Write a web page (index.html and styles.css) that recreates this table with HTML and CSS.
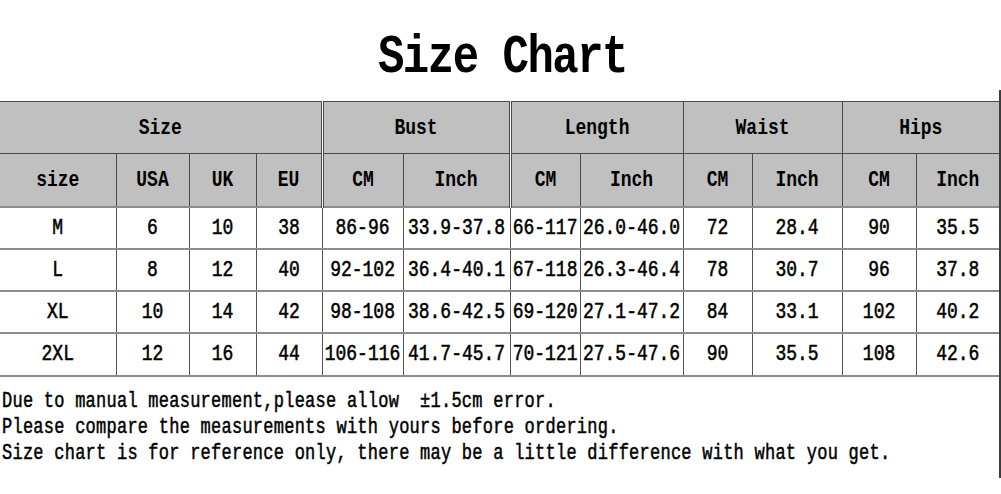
FILE: index.html
```html
<!DOCTYPE html>
<html>
<head>
<meta charset="utf-8">
<link rel="stylesheet" href="styles.css">
</head>
<body>
<h1 class="title"><span>Size Chart</span></h1>
<div class="sheet">
  <table class="chart">
    <colgroup>
      <col style="width:116px"><col style="width:73px"><col style="width:67px"><col style="width:66px">
      <col style="width:81px"><col style="width:107px"><col style="width:70px"><col style="width:103px">
      <col style="width:69px"><col style="width:90px"><col style="width:74px"><col style="width:83px">
    </colgroup>
    <tr class="group">
      <th colspan="4" class="sep"><span>Size</span></th>
      <th colspan="2" class="sep"><span>Bust</span></th>
      <th colspan="2"><span>Length</span></th>
      <th colspan="2"><span>Waist</span></th>
      <th colspan="2"><span>Hips</span></th>
    </tr>
    <tr class="sub">
      <th><span>size</span></th><th><span>USA</span></th><th><span>UK</span></th><th class="sep"><span>EU</span></th>
      <th><span>CM</span></th><th class="sep"><span>Inch</span></th>
      <th><span>CM</span></th><th><span>Inch</span></th>
      <th><span>CM</span></th><th><span>Inch</span></th>
      <th><span>CM</span></th><th><span>Inch</span></th>
    </tr>
    <tr class="row">
      <td><span>M</span></td><td><span>6</span></td><td><span>10</span></td><td><span>38</span></td>
      <td><span>86-96</span></td><td><span>33.9-37.8</span></td><td><span>66-117</span></td><td><span>26.0-46.0</span></td>
      <td><span>72</span></td><td><span>28.4</span></td><td><span>90</span></td><td><span>35.5</span></td>
    </tr>
    <tr class="row">
      <td><span>L</span></td><td><span>8</span></td><td><span>12</span></td><td><span>40</span></td>
      <td><span>92-102</span></td><td><span>36.4-40.1</span></td><td><span>67-118</span></td><td><span>26.3-46.4</span></td>
      <td><span>78</span></td><td><span>30.7</span></td><td><span>96</span></td><td><span>37.8</span></td>
    </tr>
    <tr class="row">
      <td><span>XL</span></td><td><span>10</span></td><td><span>14</span></td><td><span>42</span></td>
      <td><span>98-108</span></td><td><span>38.6-42.5</span></td><td><span>69-120</span></td><td><span>27.1-47.2</span></td>
      <td><span>84</span></td><td><span>33.1</span></td><td><span>102</span></td><td><span>40.2</span></td>
    </tr>
    <tr class="row last">
      <td><span>2XL</span></td><td><span>12</span></td><td><span>16</span></td><td><span>44</span></td>
      <td><span>106-116</span></td><td><span>41.7-45.7</span></td><td><span>70-121</span></td><td><span>27.5-47.6</span></td>
      <td><span>90</span></td><td><span>35.5</span></td><td><span>108</span></td><td><span>42.6</span></td>
    </tr>
  </table>
  <div class="notes">
    <p><span>Due to manual measurement,please allow&nbsp; ±1.5cm error.</span></p>
    <p><span>Please compare the measurements with yours before ordering.</span></p>
    <p><span>Size chart is for reference only, there may be a little difference with what you get.</span></p>
  </div>
</div>
</body>
</html>
```

FILE: styles.css
```css
html, body {
  margin: 0;
  padding: 0;
  background: #ffffff;
}
body {
  width: 1001px;
  font-family: "Liberation Mono", "Courier New", monospace;
  color: #000;
}
.title {
  margin: 0;
  height: 90px;
  box-sizing: border-box;
  padding-top: 40px;
  text-align: center;
  font-size: 44px;
  line-height: 44px;
  font-weight: bold;
  letter-spacing: -1.5px;
}
.title span {
  display: inline-block;
  transform: scaleY(1.2);
  transform-origin: center bottom;
  padding-left: 4px;
}
.sheet {
  box-sizing: border-box;
  width: 1001px;
  padding-top: 11px;
  padding-bottom: 11px;
  border-right: 2px solid #3c3c3c;
}
.chart {
  width: 999px;
  table-layout: fixed;
  border-collapse: collapse;
  border-top: 1px solid #4a4a4a;
}
.chart th, .chart td {
  padding: 0;
  text-align: center;
  vertical-align: middle;
  font-size: 18px;
  white-space: nowrap;
  overflow: hidden;
}
.chart th span, .chart td span {
  display: inline-block;
  transform: scaleY(1.2);
}
.chart th {
  background: #c0c0c0;
  font-weight: bold;
  border: 1px solid #4a4a4a;
}
.chart th.sep {
  border-right: 3px double #4a4a4a;
}
.chart td {
  font-weight: normal;
  -webkit-text-stroke: 0.45px #000;
  border-left: 1px solid #555;
  border-right: 1px solid #555;
  border-top: 2px solid #8c8c8c;
  border-bottom: 2px solid #8c8c8c;
}
.chart tr > :first-child {
  border-left: none;
}
.chart tr > :last-child {
  border-right: none;
}
.group { height: 52px; }
.sub { height: 53px; }
.row { height: 42px; }
.row.last { height: 43px; }
.notes {
  margin-top: 12px;
  padding-left: 2px;
}
.notes p {
  margin: 0;
  height: 26px;
  line-height: 26px;
  font-size: 17px;
  letter-spacing: 0.25px;
  -webkit-text-stroke: 0.4px #000;
  white-space: pre;
}
.notes p span {
  display: inline-block;
  transform: scaleY(1.3);
}
```
